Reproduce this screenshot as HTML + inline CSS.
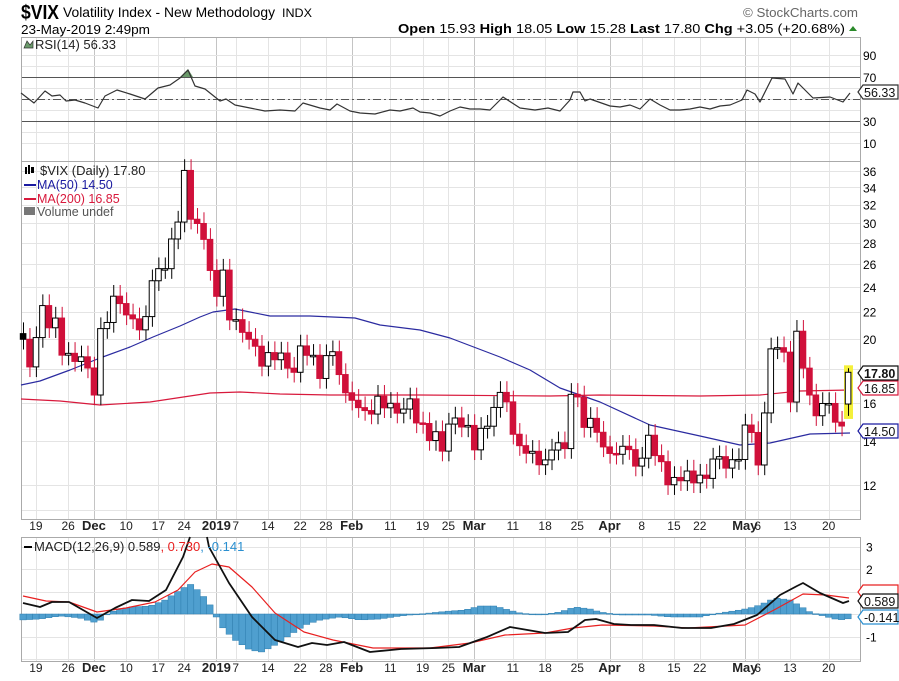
<!DOCTYPE html>
<html><head><meta charset="utf-8"><style>
html,body{margin:0;padding:0;background:#fff;width:899px;height:681px;overflow:hidden}
svg{display:block;font-family:"Liberation Sans",sans-serif}
</style></head><body>
<svg id="s" width="899" height="681" xmlns="http://www.w3.org/2000/svg">
<text x="21" y="19" font-size="20" font-weight="bold" textLength="38" lengthAdjust="spacingAndGlyphs">$VIX</text>
<text x="63" y="17" font-size="14" textLength="212" lengthAdjust="spacingAndGlyphs">Volatility Index - New Methodology</text>
<text x="282" y="17" font-size="11.5" textLength="30" lengthAdjust="spacingAndGlyphs">INDX</text>
<text x="21" y="34" font-size="12.5" textLength="129" lengthAdjust="spacingAndGlyphs">23-May-2019 2:49pm</text>
<text x="743" y="17" font-size="13" fill="#666" textLength="115" lengthAdjust="spacingAndGlyphs">© StockCharts.com</text>
<text x="398" y="33" font-size="13" textLength="447" lengthAdjust="spacingAndGlyphs"><tspan font-weight="bold">Open</tspan> 15.93 <tspan font-weight="bold">High</tspan> 18.05 <tspan font-weight="bold">Low</tspan> 15.28 <tspan font-weight="bold">Last</tspan> 17.80 <tspan font-weight="bold">Chg</tspan> +3.05 (+20.68%)</text>
<polygon points="849,31 853,26 857,31" fill="#2a8a2a"/>
<g id="g"></g>
</svg>
<script>
var NS="http://www.w3.org/2000/svg",G=document.getElementById("g");
function el(t,a,txt){var e=document.createElementNS(NS,t);for(var k in a)e.setAttribute(k,a[k]);if(txt!=null)e.textContent=txt;G.appendChild(e);return e;}
var L=21,R=860;
var panels=[[37,161],[161,519],[537,661]];
var closes=[19.98,18.14,20.1,22.48,20.8,21.52,18.9,19.02,18.49,18.79,18.07,
16.44,20.74,21.19,23.23,22.64,21.76,21.46,20.65,21.63,24.52,25.58,25.58,28.38,30.11,36.07,30.41,29.96,28.34,25.42,
23.22,25.45,21.38,21.4,20.47,19.98,19.5,18.19,19.07,18.6,19.04,18.06,17.8,19.52,18.89,18.89,17.42,18.87,19.13,17.66,16.57,
16.14,15.73,15.57,15.38,16.37,15.72,15.97,15.43,15.65,16.22,14.91,14.88,14.02,14.46,13.51,14.85,15.17,14.7,14.78,
13.57,14.63,14.74,15.74,16.59,16.05,14.33,13.77,13.41,13.5,12.88,13.1,13.56,13.91,13.63,16.48,16.33,14.68,15.15,14.43,13.71,
13.4,13.36,13.74,13.58,12.82,13.18,14.28,13.3,13.02,12.01,12.32,12.18,12.6,12.09,12.42,12.28,13.14,13.25,12.73,13.11,13.12,
14.8,14.42,12.87,15.44,19.32,19.4,19.1,16.04,20.55,18.06,16.44,15.29,15.96,15.96,14.95,14.75,17.8];
var N=closes.length,step=(848-23)/(N-1);
function bx(i){return 23+i*step;}
function py(p){return 171+(Math.log(36)-Math.log(p))*285.8;}
var labs=[["19",2],["26",7],["Dec",11,1],["10",16],["17",21],["24",25],["2019",30,1],["7",33],["14",38],["22",43],["28",47],["Feb",51,1],["11",57],["19",62],["25",66],["Mar",70,1],["11",76],["18",81],["25",86],["Apr",91,1],["8",96],["15",101],["22",105],["May",112,1],["6",114],["13",119],["20",125]];
labs.forEach(function(l){var x=Math.round(bx(l[1]))+0.5;panels.forEach(function(p){el("line",{x1:x,x2:x,y1:p[0],y2:p[1],stroke:l[2]?"#c4c4c4":"#e4e4e4","stroke-width":1});});});
function ry(v){return 154-1.1*v;}
for(var v=10;v<=90;v+=10){var y=Math.round(ry(v))+0.5;el("line",{x1:L,x2:R,y1:y,y2:y,stroke:(v==70||v==30)?"#555":"#e4e4e4","stroke-width":1});}
el("line",{x1:L,x2:R,y1:99.5,y2:99.5,stroke:"#555","stroke-dasharray":"8,3,2,3"});
[90,70,30,10].forEach(function(v){el("text",{x:863,y:ry(v)+5,"font-size":12},v);});
[36,34,32,30,28,26,24,22,20,18,16,14,12,11].forEach(function(p){var y=Math.round(py(p))+0.5;el("line",{x1:L,x2:R,y1:y,y2:y,stroke:"#e4e4e4"});});
[36,34,32,30,28,26,24,22,20,16,14,12].forEach(function(p){el("text",{x:863,y:py(p)+5,"font-size":12},p);});
[3,2,1,0,-1,-2].forEach(function(v){var y=Math.round(614-22.5*v)+0.5;el("line",{x1:L,x2:R,y1:y,y2:y,stroke:"#e4e4e4"});});
[[3,"3"],[2,"2"],[-1,"-1"]].forEach(function(a){el("text",{x:866,y:614-22.5*a[0]+5,"font-size":12},a[1]);});
panels.forEach(function(p){el("rect",{x:L+0.5,y:p[0]+0.5,width:R-L,height:p[1]-p[0],fill:"none",stroke:"#aaa"});});
labs.forEach(function(l){var x=bx(l[1]);[530,672].forEach(function(y){el("text",{x:x,y:y,"font-size":l[2]?13:12,"font-weight":l[2]?"bold":"normal","text-anchor":"middle",fill:"#222"},l[0]);});});
function poly(pts,c,w){el("polyline",{points:pts.map(function(p){return p.join(",")}).join(" "),fill:"none",stroke:c,"stroke-width":w||1,"stroke-linejoin":"round"});}
poly([[21,385],[40,381],[70,370],[100,358],[130,347],[153,337],[180,326],[200,317],[213,312],[235,309],[270,316],[310,316],[355,318],[380,325],[420,330],[450,338],[500,357],[530,370],[560,388],[600,402],[650,425],[700,436],[740,445],[770,443],[810,434],[850,433]],"#2b2ba0",1.2);
poly([[21,399],[60,401],[100,405],[150,402],[210,393],[240,392],[280,394],[330,395],[420,395],[550,396],[600,395],[700,396],[760,395],[800,391],[850,390]],"#d8193c",1.2);
for(var i=0;i<N;i++){var c=closes[i],o=i?closes[i-1]:c*1.02,h,lo;
 if(i==N-1){o=15.93;h=18.05;lo=15.28;}else{h=Math.max(o,c)*1.04;lo=Math.min(o,c)*0.965;}
 var x=bx(i),up=c>=o,col=(i&&c<closes[i-1])?"#d0103a":"#000";
 if(i==N-1)el("rect",{x:x-4,y:py(h)-3,width:9,height:py(lo)-py(h)+6,fill:"#f4f03a"});
 el("line",{x1:x+0.5,x2:x+0.5,y1:py(h),y2:py(lo),stroke:col});
 var t=py(Math.max(o,c)),b=py(Math.min(o,c));if(b-t<1.5)b=t+1.5;
 el("rect",{x:x-2.7,y:t,width:5.6,height:b-t,fill:up?"#fff":col,stroke:col});
}
var rsi=[[21,93],[34,103],[45,91],[52,96],[60,95],[66,101],[75,100],[85,103],[98,108],[105,96],[117,90],[130,94],[145,99],[158,88],[170,85],[180,78],[188,70],[195,86],[205,89],[220,101],[226,99],[235,105],[250,108],[265,111],[280,110],[295,111],[303,103],[320,108],[330,110],[337,104],[350,111],[360,113],[375,114],[390,110],[400,111],[413,108],[420,112],[430,113],[440,116],[450,111],[460,107],[470,109],[480,109],[490,110],[503,97],[520,108],[535,110],[548,108],[560,111],[570,100],[573,92],[580,92],[585,101],[590,99],[610,106],[620,107],[630,105],[640,109],[650,99],[660,105],[670,110],[680,110],[690,109],[700,107],[710,109],[720,106],[730,105],[742,100],[747,90],[755,94],[760,102],[772,78],[785,79],[793,94],[798,83],[813,98],[830,97],[843,102],[850,93]];
el("polygon",{points:"180,77 188,69 193,77",fill:"#6a9a6a"});
poly(rsi,"#333",1.2);
var hist=[[21,620],[40,619],[60,616],[80,618],[97,623],[110,612],[130,607],[150,606],[165,600],[180,590],[190,584],[200,592],[210,605],[215,614],[220,625],[235,640],[250,650],[262,652],[275,645],[290,635],[305,625],[320,620],[340,617],[360,620],[380,619],[400,616],[420,614],[450,611],[465,610],[480,606],[495,606],[505,609],[520,613],[540,615],[560,612],[575,607],[590,609],[600,612],[620,615],[650,615],[670,617],[700,617],[720,613],[740,610],[750,608],[760,605],[775,598],[790,600],[800,606],[810,612],[820,615],[835,619],[845,620],[850,618]];
function interp(a,x){for(var k=1;k<a.length;k++){if(x<=a[k][0]){var p=a[k-1],q=a[k];return p[1]+(q[1]-p[1])*(x-p[0])/(q[0]-p[0]);}}return a[a.length-1][1];}
for(var i=0;i<N;i++){var x=bx(i),y=interp(hist,x);el("rect",{x:x-3.2,y:Math.min(y,614),width:6.4,height:Math.max(Math.abs(y-614),0.8),fill:"#4f9fcf",stroke:"#2f7fb0","stroke-width":0.5});}
poly([[23,596],[46,601],[69,602],[97,612],[126,608],[155,602],[178,590],[195,572],[212,564],[229,567],[252,587],[275,613],[304,632],[333,640],[373,648],[430,648],[470,643],[505,635],[545,633],[573,628],[602,625],[654,626],[688,628],[745,625],[774,610],[803,594],[826,595],[849,598]],"#e82020",1.2);
poly([[23,603],[40,607],[52,602],[69,602],[97,618],[115,608],[132,600],[149,601],[166,590],[183,557],[190,537]],"#111",1.8);
poly([[207,537],[209,547],[229,583],[252,617],[275,640],[298,647],[312,643],[327,645],[344,642],[370,652],[401,649],[436,648],[459,647],[487,637],[510,627],[545,633],[568,632],[585,620],[596,619],[614,624],[631,625],[654,625],[682,628],[711,628],[734,624],[757,615],[780,595],[797,586],[803,583],[820,593],[843,603],[849,601]],"#111",1.8);
el("text",{x:35,y:49,"font-size":13,fill:"#222"},"RSI(14) 56.33");
el("polygon",{points:"24,48 27,41 30,45 33,41 33,48",fill:"#6a9a6a",stroke:"#333","stroke-width":0.7});
el("text",{x:40,y:175,"font-size":13,fill:"#222"},"$VIX (Daily) 17.80");
el("rect",{x:25,y:167,width:2,height:7,fill:"#000"});el("rect",{x:28,y:165,width:2,height:9,fill:"#000"});el("rect",{x:31,y:167,width:3,height:6,fill:"#000"});
el("line",{x1:24,x2:36,y1:185,y2:185,stroke:"#1a1aa0","stroke-width":2});
el("text",{x:37,y:189,"font-size":12.5,fill:"#1a1aa0"},"MA(50) 14.50");
el("line",{x1:24,x2:36,y1:199,y2:199,stroke:"#d8193c","stroke-width":2});
el("text",{x:37,y:203,"font-size":12.5,fill:"#d8193c"},"MA(200) 16.85");
el("rect",{x:24,y:207,width:11,height:8,fill:"#777"});
el("text",{x:37,y:216,"font-size":12.5,fill:"#555"},"Volume undef");
el("line",{x1:24,x2:32,y1:547,y2:547,stroke:"#000","stroke-width":2});
var t=el("text",{x:34,y:551,"font-size":13,fill:"#222"});
t.innerHTML='MACD(12,26,9) 0.589<tspan fill="#e82020">, 0.730</tspan><tspan fill="#2a8fd0">, -0.141</tspan>';
function tag(y,txt,c,bold){el("path",{d:"M858,"+y+" l5,-7 h35 v14 h-35 z",fill:"#fff",stroke:c,"stroke-width":1.2});el("text",{x:864,y:y+5,"font-size":12.5,"font-weight":bold?"bold":"normal",fill:"#111"},txt);}
tag(92,"56.33","#333");
tag(388,"16.85","#d8193c");
tag(373,"17.80","#111",1);
tag(431,"14.50","#1a1aa0");
tag(592,"","#e82020");
tag(617,"-0.141","#2a8fd0");
tag(601,"0.589","#111");
</script>
</body></html>
